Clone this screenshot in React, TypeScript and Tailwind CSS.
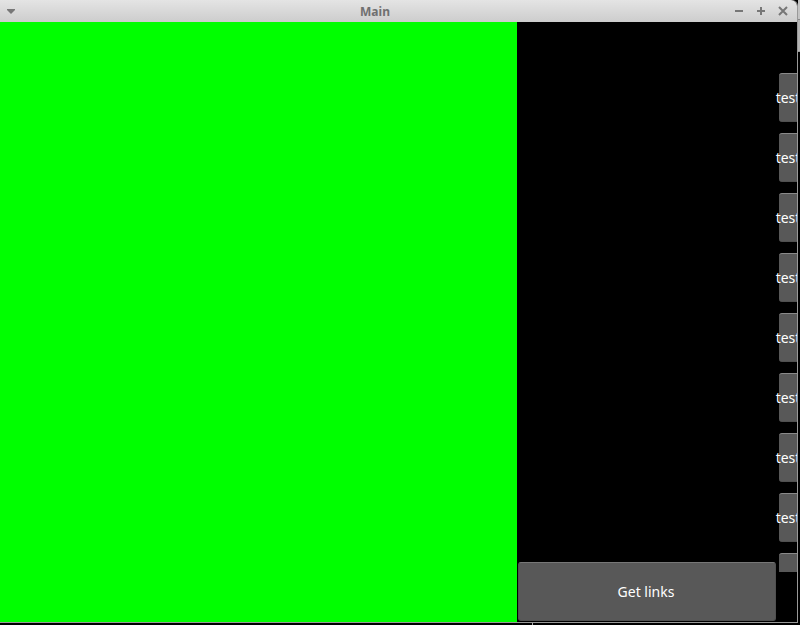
import React, { useState } from "react";

const rows = [1, 2, 3, 4, 5, 6, 7, 8, 9];

function TitleBar() {
  return (
    <header className="flex h-[22px] shrink-0 items-center rounded-tr-md bg-linear-to-b from-[#e4e4e4] to-[#cdcdcd] text-[#777777]">
      <button aria-label="Window menu" className="flex h-full w-[22px] items-center justify-center">
        <svg viewBox="0 0 8 5" className="h-[5px] w-2" fill="currentColor">
          <path d="M0 0h8v1L4 5L0 1z" />
        </svg>
      </button>
      <h1 className="flex-1 pt-[2px] text-center text-[12px] leading-5 font-bold text-[#707070]">Main</h1>
      <div className="flex h-full items-center pr-[3px]">
        <button aria-label="Minimize" className="flex h-full w-[22px] items-center justify-center">
          <svg viewBox="0 0 10 10" className="size-[10px]" stroke="currentColor" strokeWidth="2">
            <path d="M1 5h8" />
          </svg>
        </button>
        <button aria-label="Maximize" className="flex h-full w-[22px] items-center justify-center">
          <svg viewBox="0 0 10 10" className="size-[10px]" stroke="currentColor" strokeWidth="2">
            <path d="M1 5h8M5 1v8" />
          </svg>
        </button>
        <button aria-label="Close" className="flex h-full w-[22px] items-center justify-center">
          <svg viewBox="0 0 10 10" className="size-[10px]" stroke="currentColor" strokeWidth="2">
            <path d="M1 1l8 8M9 1l-8 8" />
          </svg>
        </button>
      </div>
    </header>
  );
}

export default function App() {
  const [selected, setSelected] = useState<number | null>(null);

  return (
    <div className="flex h-screen overflow-hidden bg-black font-['Noto_Sans','Open_Sans',sans-serif]">
      <div className="flex min-w-0 flex-1 flex-col">
        <div className="flex min-h-0 flex-1 flex-col rounded-tr-md border-r border-b border-[#999999]">
          <TitleBar />
          <main className="flex min-h-0 flex-1 bg-black">
            <section className="min-w-0 flex-1 bg-[#00ff00]" />
            <section className="flex w-[260px] flex-col justify-end px-px pb-px">
              <button className="h-[59px] rounded-[3px] border border-[#505050] border-t-[#777777] bg-[#585858] pr-[2px] text-[14px] leading-5 text-white">
                Get links
              </button>
            </section>
            {/* wide enough for labels that spill past the left edge of the buttons */}
            <nav className="-ml-1 mb-[50px] flex w-6 flex-col gap-[11px] overflow-hidden pt-[51px] pl-[6px]">
              {rows.map((row) => (
                <button
                  key={row}
                  onClick={() => setSelected(row)}
                  aria-pressed={selected === row}
                  className="flex h-[49px] w-[22px] shrink-0 items-center justify-center rounded-[3px] border-y border-t-[#8a8a8a] border-b-[#505050] bg-[#585858] pr-1 text-[14px] leading-5 whitespace-nowrap text-white"
                >
                  test
                </button>
              ))}
            </nav>
          </main>
        </div>
        <div className="flex h-[2px] shrink-0">
          <div className="w-2/3" />
          <div className="w-px bg-[#aaaaaa]" />
        </div>
      </div>
      <div className="w-[2px] shrink-0">
        <div className="h-5 border-b border-[#888888] bg-[#c4c4c4]" />
        <div className="h-8 border-b border-[#999999] bg-[#b4b4b4]" />
      </div>
    </div>
  );
}
